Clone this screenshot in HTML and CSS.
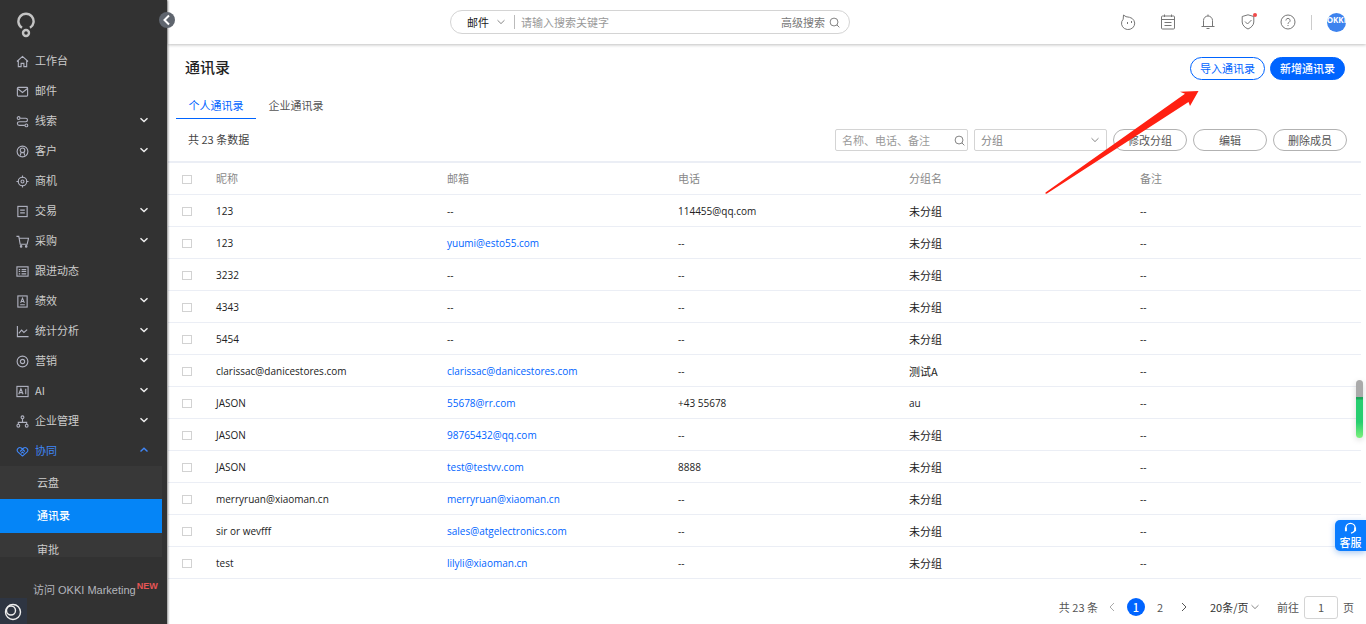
FILE: index.html
```html
<!DOCTYPE html>
<html lang="zh-CN">
<head>
<meta charset="utf-8">
<meta name="viewport" content="width=device-width, initial-scale=1">
<title>通讯录</title>
<link rel="stylesheet" href="styles.css">
</head>
<body>
<svg class="defs" aria-hidden="true">
  <symbol id="down" viewBox="0 0 10 10"><path d="M1.500 3.200 5 6.600l3.500-3.400"/></symbol>
  <symbol id="up" viewBox="0 0 10 10"><path d="M1.500 6.600 5 3.200l3.500 3.400"/></symbol>
  <symbol id="search" viewBox="0 0 12 12"><circle cx="5.500" cy="5.500" r="4.300"/><path d="m8.600 8.600 2.700 2.700"/></symbol>
</svg>
<div class="app">
  <aside class="sidebar">
    <button class="collapse" type="button" aria-label="收起"><svg viewBox="0 0 16 16"><path d="M10 3.500 5.500 8l4.500 4.500"/></svg></button>
    <svg class="logo" viewBox="0 0 18 26"><path d="M5 15.800A7.600 7.600 0 1 1 13 15.800"/><circle cx="9" cy="21" r="3"/></svg>
    <nav class="nav">
      <a class="item" href="#"><svg viewBox="0 0 14 14"><path d="M1 7 7 1.500 13 7M2.500 6v6.500H5.500V9h3v3.500h3V6"/></svg><span>工作台</span></a>
      <a class="item" href="#"><svg viewBox="0 0 14 14"><rect x="1.500" y="2.500" width="11" height="9.500" rx="1"/><path d="m2 4 5 4 5-4"/></svg><span>邮件</span></a>
      <a class="item" href="#"><svg viewBox="0 0 14 14"><circle cx="2.800" cy="3.300" r="1.500"/><circle cx="11.200" cy="11.200" r="1.500"/><path d="M4.500 3.500h6a1.800 1.800 0 0 1 0 3.700H3.500a2 2 0 0 0 0 4H9.500"/></svg><span>线索</span><svg class="chev"><use href="#down"/></svg></a>
      <a class="item" href="#"><svg viewBox="0 0 14 14"><circle cx="7" cy="7" r="5.800"/><circle cx="7" cy="5.700" r="2.500"/><path d="M5.600 7.800 4.500 11.500M8.400 7.800l1.100 3.700"/></svg><span>客户</span><svg class="chev"><use href="#down"/></svg></a>
      <a class="item" href="#"><svg viewBox="0 0 14 14"><circle cx="7" cy="7" r="4.600"/><circle cx="7" cy="7" r="1.600"/><path d="M7 .500v2.500M7 11v2.500M.500 7h2.500M11 7h2.500"/></svg><span>商机</span></a>
      <a class="item" href="#"><svg viewBox="0 0 14 14"><rect x="2" y="1.500" width="10" height="11"/><path d="M4.500 5.500h5M4.500 8.500h5"/></svg><span>交易</span><svg class="chev"><use href="#down"/></svg></a>
      <a class="item" href="#"><svg viewBox="0 0 14 14"><path d="M.500 1.500H3l1.500 8.500h7.500l1.500-6.500H3.500"/><circle cx="5.500" cy="12.300" r=".8"/><circle cx="11" cy="12.300" r=".8"/></svg><span>采购</span><svg class="chev"><use href="#down"/></svg></a>
      <a class="item" href="#"><svg viewBox="0 0 14 14"><rect x="1" y="2" width="12" height="10"/><path d="M3 5h1.500M6 5h5M3 7h1.500M6 7h5M3 9.500h1.500M6 9.500h5"/></svg><span>跟进动态</span></a>
      <a class="item" href="#"><svg viewBox="0 0 14 14"><rect x="2" y="1" width="10" height="12"/><path d="M5 8.500 7 3.500l2 5M5.600 7h2.800M4.500 10.500h5"/></svg><span>绩效</span><svg class="chev"><use href="#down"/></svg></a>
      <a class="item" href="#"><svg viewBox="0 0 14 14"><path d="M1.500 1v11.500H13.500M3 9l3-3.500 2.500 2.500L12 5"/></svg><span>统计分析</span><svg class="chev"><use href="#down"/></svg></a>
      <a class="item" href="#"><svg viewBox="0 0 14 14"><circle cx="7" cy="7" r="5.800"/><circle cx="7" cy="7" r="2.300"/></svg><span>营销</span><svg class="chev"><use href="#down"/></svg></a>
      <a class="item" href="#"><svg viewBox="0 0 14 14"><rect x="1" y="1.500" width="12" height="11"/><path d="m3 10 2.300-6 2.300 6M3.800 8.200h3M10.500 4v6"/></svg><span>AI</span><svg class="chev"><use href="#down"/></svg></a>
      <a class="item" href="#"><svg viewBox="0 0 14 14"><circle cx="7" cy="2.500" r="1.500"/><circle cx="2.500" cy="11.500" r="1.500"/><circle cx="11.500" cy="11.500" r="1.500"/><path d="M7 4v4M2.500 10V8h9v2"/></svg><span>企业管理</span><svg class="chev"><use href="#down"/></svg></a>
      <a class="item open" href="#"><svg viewBox="0 0 14 14"><path d="M7 12 2 7.500C-.200 4.800 3.500 1.200 6 3.500l3.500 3.500M7 12l5-4.500c2.200-2.700-1.500-6.300-4-4L4.500 7M5.500 9 7 7.500 8.500 9"/></svg><span>协同</span><svg class="chev"><use href="#up"/></svg></a>
    </nav>
    <div class="subnav">
      <a href="#">云盘</a>
      <a class="active" href="#">通讯录</a>
      <a href="#">审批</a>
    </div>
    <a class="marketing" href="#">访问 OKKI Marketing<sup>NEW</sup></a>
    <button class="corner" type="button" aria-label="助手"><svg viewBox="0 0 18 18"><circle cx="9" cy="9" r="7.500"/><circle cx="7" cy="7.500" r="4.500"/></svg></button>
  </aside>

  <div class="main">
    <header class="topbar">
      <form class="global-search">
        <label class="scope"><select aria-label="搜索范围"><option>邮件</option></select><svg><use href="#down"/></svg></label>
        <input type="text" placeholder="请输入搜索关键字" aria-label="搜索关键字">
        <button type="button">高级搜索<svg><use href="#search"/></svg></button>
      </form>
      <div class="tools">
        <button type="button" aria-label="机器人"><svg viewBox="0 0 16 16"><path d="M3.200 5.200A6.600 6.200 0 1 0 9.500 3.300Q5.500 3.200 3.500 1L3.200 5.200M7.500 8v2M11.500 7v2"/></svg></button>
        <button type="button" aria-label="日程"><svg viewBox="0 0 16 16"><rect x="1.500" y="2" width="13" height="13" rx="1"/><path d="M1.500 5.500h13M4.500.500V3M11.500.500V3M4.500 8.500h7M4.500 11.500h7"/></svg></button>
        <button type="button" aria-label="通知"><svg viewBox="0 0 16 16"><path d="M1.500 12.500h13M3.500 12.500V6.500a4.500 4.500 0 0 1 9 0v6M8 .500V2M6.500 14.500h3"/></svg></button>
        <button type="button" aria-label="安全"><svg viewBox="0 0 16 16"><path d="M8 .800 13.800 2.500V8c0 3.200-2.800 5.700-5.800 7C5 13.700 2.200 11.200 2.200 8V2.500zM5 7.500 7.500 10l4-4"/></svg><i class="dot"></i></button>
        <button type="button" aria-label="帮助"><svg viewBox="0 0 16 16"><circle cx="8" cy="8" r="7"/><path d="M5.900 6.500a2.100 2.100 0 1 1 3.200 1.800C8.300 8.800 8 9 8 9.800M8 11v1"/></svg></button>
        <span class="divider"></span>
        <button class="avatar" type="button">OKKI</button>
      </div>
    </header>

    <main class="content">
      <div class="heading">
        <h1>通讯录</h1>
        <button class="pill outline" type="button">导入通讯录</button>
        <button class="pill primary" type="button">新增通讯录</button>
      </div>
      <div class="tabs"><a class="current" href="#">个人通讯录</a><a href="#">企业通讯录</a></div>
      <div class="filters">
        <span class="count">共 23 条数据</span>
        <label class="field"><input type="text" placeholder="名称、电话、备注" aria-label="名称、电话、备注"><svg class="glass"><use href="#search"/></svg></label>
        <label class="field"><select aria-label="分组"><option>分组</option></select><svg><use href="#down"/></svg></label>
        <button class="pill" type="button">修改分组</button>
        <button class="pill" type="button">编辑</button>
        <button class="pill" type="button">删除成员</button>
      </div>
      <table class="contacts">
        <thead><tr><th class="check"><input type="checkbox" aria-label="全选"></th><th>昵称</th><th>邮箱</th><th>电话</th><th>分组名</th><th>备注</th></tr></thead>
        <tbody>
          <tr><td class="check"><input type="checkbox" aria-label="选择"></td><td>123</td><td>--</td><td>114455@qq.com</td><td class="group">未分组</td><td>--</td></tr>
          <tr><td class="check"><input type="checkbox" aria-label="选择"></td><td>123</td><td><a href="#">yuumi@esto55.com</a></td><td>--</td><td class="group">未分组</td><td>--</td></tr>
          <tr><td class="check"><input type="checkbox" aria-label="选择"></td><td>3232</td><td>--</td><td>--</td><td class="group">未分组</td><td>--</td></tr>
          <tr><td class="check"><input type="checkbox" aria-label="选择"></td><td>4343</td><td>--</td><td>--</td><td class="group">未分组</td><td>--</td></tr>
          <tr><td class="check"><input type="checkbox" aria-label="选择"></td><td>5454</td><td>--</td><td>--</td><td class="group">未分组</td><td>--</td></tr>
          <tr><td class="check"><input type="checkbox" aria-label="选择"></td><td>clarissac@danicestores.com</td><td><a href="#">clarissac@danicestores.com</a></td><td>--</td><td class="group">测试A</td><td>--</td></tr>
          <tr><td class="check"><input type="checkbox" aria-label="选择"></td><td>JASON</td><td><a href="#">55678@rr.com</a></td><td>+43 55678</td><td>au</td><td>--</td></tr>
          <tr><td class="check"><input type="checkbox" aria-label="选择"></td><td>JASON</td><td><a href="#">98765432@qq.com</a></td><td>--</td><td class="group">未分组</td><td>--</td></tr>
          <tr><td class="check"><input type="checkbox" aria-label="选择"></td><td>JASON</td><td><a href="#">test@testvv.com</a></td><td>8888</td><td class="group">未分组</td><td>--</td></tr>
          <tr><td class="check"><input type="checkbox" aria-label="选择"></td><td>merryruan@xiaoman.cn</td><td><a href="#">merryruan@xiaoman.cn</a></td><td>--</td><td class="group">未分组</td><td>--</td></tr>
          <tr><td class="check"><input type="checkbox" aria-label="选择"></td><td>sir or wevfff</td><td><a href="#">sales@atgelectronics.com</a></td><td>--</td><td class="group">未分组</td><td>--</td></tr>
          <tr><td class="check"><input type="checkbox" aria-label="选择"></td><td>test</td><td><a href="#">lilyli@xiaoman.cn</a></td><td>--</td><td class="group">未分组</td><td>--</td></tr>
        </tbody>
      </table>
      <div class="pager">
        <span class="total">共 23 条</span>
        <button class="prev" type="button" aria-label="上一页"><svg viewBox="0 0 10 10"><path d="M7 1 3 5l4 4"/></svg></button>
        <button class="page on" type="button">1</button>
        <button class="page" type="button">2</button>
        <button class="next" type="button" aria-label="下一页"><svg viewBox="0 0 10 10"><path d="m3 1 4 4-4 4"/></svg></button>
        <label class="size"><select aria-label="每页条数"><option>20条/页</option></select><svg><use href="#down"/></svg></label>
        <label class="jump">前往<input type="text" value="1">页</label>
      </div>
    </main>
  </div>
</div>

<svg class="arrow" viewBox="0 0 156 106" aria-hidden="true"><path d="M153.500 1 135 1.800l5 2L.500 102.500q-.500 2 1.500 1L143.500 12l1.500 4z"/></svg>
<div class="meter" aria-hidden="true"></div>
<button class="service" type="button"><svg viewBox="0 0 14 14"><path d="M2.500 9.500A5 5 0 0 1 2 6.500a5 5 0 0 1 10 0c0 3-1.500 5-4.500 5.500"/><path class="ear" d="M2 6v4M12 6v4"/></svg>客服</button>
</body>
</html>
```
FILE: styles.css
```css
* { box-sizing: border-box; }
body {
  margin: 0;
  position: relative;
  overflow-x: hidden;
  background: #fff;
  color: #222;
  font: 11px/16px "Noto Sans CJK SC", sans-serif;
}
button, input, select { font: inherit; color: inherit; margin: 0; }
button { padding: 0; border: 0; background: none; }
select { appearance: none; border: 0; background: none; padding: 0; outline: 0; }
a { color: inherit; text-decoration: none; }
svg { fill: none; stroke: currentColor; stroke-width: 1; flex: none; }
.defs { position: absolute; width: 0; height: 0; }
.app { display: flex; min-height: 100vh; }

/* Sidebar */
.sidebar {
  position: relative;
  z-index: 2;
  flex: none;
  display: flex;
  flex-direction: column;
  width: 167px;
  padding-top: 12px;
  background: #323232;
  color: #ccc;
  box-shadow: 1px 0 2px rgba(0, 0, 0, .45);
}
.collapse {
  position: absolute;
  top: 12px;
  right: -8px;
  width: 16px;
  height: 16px;
  border-radius: 50%;
  background: #5f656e;
  color: #fff;
}
.collapse svg { display: block; stroke-width: 2; }
.logo { width: 18px; height: 26px; margin-left: 17px; stroke: #c4c4c4; stroke-width: 2.4; }
.nav { display: flex; flex-direction: column; padding-top: 8px; }
.item { display: flex; align-items: center; gap: 6px; height: 30px; padding: 0 18px 0 16px; }
.item svg { width: 13px; height: 13px; color: #b0b2c0; stroke-width: 1.2; }
.item span { padding-bottom: 2px; }
.item .chev { width: 10px; height: 10px; margin: 0 0 2px auto; color: #eee; stroke-width: 1.4; }
.item.open, .item.open svg { color: #3f86f7; }
.subnav { height: 91px; margin-right: 5px; overflow: hidden; background: #383838; }
.subnav a { display: block; height: 33px; padding-left: 37px; line-height: 33px; }
.subnav .active { height: 34px; background: #0585f7; color: #fff; font-weight: 500; }
.marketing {
  padding: 25px 0 0 33px;
  font-family: "Liberation Sans", "Noto Sans CJK SC", sans-serif;
  color: #b4b6bd;
  white-space: nowrap;
}
.marketing sup { margin-left: 1px; font-size: 9px; line-height: 1; font-weight: 700; color: #e65555; }
.corner { width: 27px; height: 28px; margin-top: auto; background: #2e3542; color: #eee; }
.corner svg { display: block; width: 18px; height: 18px; margin: 0 4px; stroke-width: 1.4; }

/* Top bar */
.main { flex: 1; min-width: 0; display: flex; flex-direction: column; padding-left: 1px; }
.topbar {
  display: grid;
  grid-template-columns: minmax(0, 282px) 400px 1fr;
  align-items: center;
  height: 44px;
  padding-right: 20px;
  box-shadow: 0 1px 3px rgba(0, 0, 0, .25);
}
.global-search {
  grid-column: 2;
  display: flex;
  align-items: center;
  height: 24px;
  padding: 0 9px 0 16px;
  border: 1px solid #d4d4d4;
  border-radius: 12px;
}
.scope { display: flex; align-items: center; gap: 5px; height: 14px; padding-right: 8px; border-right: 1px solid #bbb; }
.scope select { width: 24px; }
.scope svg, .field svg, .size svg { width: 10px; height: 10px; color: #888; }
.global-search input { flex: 1; min-width: 0; border: 0; outline: 0; padding: 0 6px; background: none; }
::placeholder { color: #999; opacity: 1; }
.global-search button { display: flex; align-items: center; gap: 4px; color: #777; }
.global-search button svg { width: 11px; height: 11px; }
.tools { display: flex; align-items: center; justify-content: flex-end; gap: 24px; color: #777; }
.tools button { position: relative; width: 16px; height: 16px; }
.tools svg { display: block; width: 16px; height: 16px; }
.dot { position: absolute; top: -1px; right: -1px; width: 4px; height: 4px; border-radius: 50%; background: #f04848; }
.divider { width: 1px; height: 15px; margin: 0 -9px; background: #ccc; }
.tools .avatar {
  display: flex;
  align-items: center;
  justify-content: center;
  width: 19px;
  height: 19px;
  padding-bottom: 5px;
  border-radius: 50%;
  background: #3d83ee;
  color: #fff;
  font: 700 8px/10px "Open Sans", sans-serif;
}

/* Page heading and filters */
.content { flex: 1; display: flex; flex-direction: column; }
.heading { display: flex; align-items: center; gap: 5px; height: 48px; padding: 0 21px 0 17px; }
h1 { flex: 1; margin: 0; padding-bottom: 2px; font-size: 15px; line-height: 24px; font-weight: 500; }
.pill {
  width: 74px;
  height: 22px;
  border: 1px solid #b2b2b2;
  border-radius: 12px;
  color: #555;
  white-space: nowrap;
}
.pill.outline, .pill.primary { width: 75px; height: 23px; border-color: #0064ff; color: #0064ff; }
.pill.primary { background: #0064ff; color: #fff; font-weight: 500; }
.tabs { display: flex; padding-left: 8px; }
.tabs a { width: 80px; height: 27px; line-height: 27px; text-align: center; color: #555; }
.tabs .current { border-bottom: 1px solid #0064ff; color: #0064ff; }
.filters { display: flex; align-items: center; gap: 6px; height: 42px; padding: 0 19px 0 20px; }
.count { flex: 1; padding-bottom: 2px; color: #444; }
.field {
  display: flex;
  align-items: center;
  width: 133px;
  height: 22px;
  padding: 0 6px;
  border: 1px solid #d4d4d4;
  border-radius: 2px;
  color: #888;
}
.field .glass { width: 11px; height: 11px; margin-right: -4px; color: #777; }
.field input, .field select { flex: 1; width: 0; min-width: 0; padding: 0; border: 0; outline: 0; background: none; }

/* Contacts */
.contacts { width: calc(100% - 5px); border-top: 2px solid #ebeef5; border-spacing: 0; table-layout: fixed; }
.contacts th, .contacts td { height: 32px; padding: 0 10px; border-bottom: 1px solid #ebeef5; text-align: left; font-weight: 400; }
.contacts th { padding-bottom: 1px; color: #888; }
.contacts td { padding-top: 1px; font-family: "Open Sans", "Noto Sans CJK SC", sans-serif; font-size: 10px; }
.contacts .group { padding-top: 0; font-family: "Noto Sans CJK SC", sans-serif; font-size: 11px; }
.contacts .check { width: 38px; padding: 1px 0 0 14px; }
.contacts a { color: #0064ff; }
.check input { appearance: none; display: block; width: 10px; height: 9px; border: 1px solid #d2d2d2; background: #fff; }
.pager { display: flex; align-items: center; justify-content: flex-end; height: 24px; margin-top: 16px; padding-right: 12px; color: #555; }
.pager button { display: block; }
.pager .prev, .pager .next { width: 10px; height: 10px; }
.pager svg { display: block; width: 10px; height: 10px; }
.prev { margin: 0 10px 0 9px; color: #aaa; }
.page { width: 18px; height: 18px; border-radius: 50%; line-height: 18px; }
.page.on { background: #0064ff; color: #fff; margin-right: 6px; font-weight: 500; }
.next { margin: 0 21px 0 10px; }
.size { display: flex; align-items: center; gap: 2px; margin-right: 17px; color: #333; }
.size select { width: 38px; }
.jump { display: flex; align-items: center; gap: 5px; }
.jump input { width: 34px; height: 23px; border: 1px solid #d4d4d4; border-radius: 3px; padding: 0; text-align: center; }

/* Overlays */
.arrow { position: absolute; z-index: 3; top: 90px; right: 165px; width: 156px; height: 106px; fill: #ff2012; stroke: none; pointer-events: none; }
.meter {
  position: absolute;
  top: 380px;
  right: 3px;
  width: 7px;
  height: 58px;
  border-radius: 4px;
  background: linear-gradient(#aaa 0 17px, #1ca65a 17px 19px, #27ce70 20px 42px, #7cf07c);
  box-shadow: 0 2px 6px rgba(0, 0, 0, .15);
}
.service {
  position: absolute;
  top: 520px;
  right: 0;
  display: flex;
  flex-direction: column;
  align-items: center;
  width: 31px;
  height: 31px;
  padding-top: 2px;
  border-radius: 5px 0 0 5px;
  background: #0a7cff;
  color: #fff;
  font-weight: 500;
  line-height: 14px;
  box-shadow: 0 2px 6px rgba(10, 100, 220, .35);
}
.service svg { width: 13px; height: 13px; stroke-width: 1.4; }
.service .ear { stroke-width: 2; }
```
